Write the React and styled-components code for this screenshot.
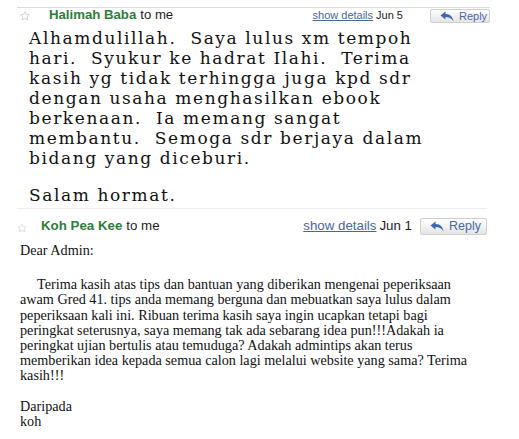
import React from 'react'
import styled, { createGlobalStyle } from 'styled-components'

const GlobalStyle = createGlobalStyle`
  html, body {
    margin: 0;
    padding: 0;
    background: #fff;
  }
`

const Page = styled.div`
  width: 519px;
  height: 439px;
  overflow: hidden;
  background: #fff;
`

const Header = styled.div`
  display: flex;
  align-items: flex-start;
  margin: ${p => p.$top}px ${p => p.$right}px 0 17px;
  padding: ${p => p.$pad}px 0 0 ${p => p.$left}px;
  height: ${p => p.$h}px;
  border-top: 1px solid ${p => p.$line};
  font-family: "Liberation Sans", Arial, sans-serif;
  font-size: ${p => p.$size}px;
  line-height: ${p => p.$lh}px;
  color: #222;
`

const Star = styled.span`
  display: flex;
  width: 10px;
  margin-top: ${p => p.$drop}px;
  margin-right: ${p => p.$gap}px;
`

const Sender = styled.span`
  font-weight: bold;
  color: #2f7d3b;
  margin-right: 4px;
`

const ToMe = styled.span`
  flex: 1;
`

const Details = styled.span`
  color: #4a6796;
  text-decoration: underline;
  margin-right: 3px;
  font-size: ${p => p.$size}px;
`

const DateText = styled.span`
  margin-right: ${p => p.$gap}px;
  font-size: ${p => p.$size}px;
`

const ReplyButton = styled.div`
  display: flex;
  align-items: center;
  gap: 5px;
  width: ${p => p.$w}px;
  height: ${p => p.$h}px;
  margin-top: ${p => p.$drop}px;
  box-sizing: border-box;
  padding-left: 9px;
  border: 1px solid #cfcfcf;
  border-radius: 2px;
  background: linear-gradient(#ffffff, #e4e4e4);
  color: #4a68a4;
  font-size: ${p => p.$size}px;
`

const BigBody = styled.div`
  width: 461px;
  overflow: hidden;
  padding: 3px 0 0 29px;
  font-family: "DejaVu Serif", serif;
  font-size: 17px;
  line-height: 20px;
  letter-spacing: 1.6px;
  color: #111;
`

const SmallBody = styled.div`
  padding: 5px 0 0 20px;
  font-family: "Liberation Serif", "Times New Roman", serif;
  font-size: 14.2px;
  line-height: 15.2px;
  color: #111;
`

const Line = styled.div`
  white-space: pre;
  margin-top: ${p => p.$gap || 0}px;
  text-indent: ${p => p.$indent || 0}px;
`

const StarIcon = ({ color }) => (
  <svg width="10" height="10" viewBox="0 0 20 20">
    <path
      d="M10 1.5l2.6 5.6 6.1.7-4.5 4.1 1.2 6-5.4-3-5.4 3 1.2-6L1.3 7.8l6.1-.7z"
      fill="none"
      stroke={color}
      strokeWidth="1.6"
      strokeLinejoin="round"
    />
  </svg>
)

const ReplyIcon = () => (
  <svg width="14" height="11" viewBox="0 0 14 11">
    <path d="M5.5 0.5 L0.5 4.5 L5.5 8.5 V6 C9 6 11.5 7 13.5 10.5 C13 6.5 10.5 3 5.5 3 Z" fill="#3a67b0" />
  </svg>
)

const MessageHeader = ({ name, date, s }) => (
  <Header
    $top={s.top}
    $right={s.right}
    $pad={s.pad}
    $left={s.left}
    $h={s.h}
    $line={s.line}
    $size={s.size}
    $lh={s.lh}
  >
    <Star $gap={s.starGap} $drop={s.starDrop}>
      <StarIcon color={s.starColor} />
    </Star>
    <Sender>{name}</Sender>
    <ToMe>to me</ToMe>
    <Details $size={s.metaSize}>show details</Details>
    <DateText $gap={s.dateGap} $size={s.metaSize}>{date}</DateText>
    <ReplyButton $w={s.bw} $h={s.bh} $drop={s.bDrop} $size={s.bSize}>
      <ReplyIcon />
      Reply
    </ReplyButton>
  </Header>
)

const firstHeader = {
  top: 7, right: 29, pad: 0, left: 3, h: 17, line: '#dcdcdc',
  size: 13.2, lh: 14, metaSize: 11, starColor: '#c9c9c9', starGap: 19, starDrop: 3,
  dateGap: 27, bw: 60, bh: 14, bDrop: 1, bSize: 11,
}

const secondHeader = {
  top: 3, right: 32, pad: 9, left: 0, h: 20, line: '#eeeeee',
  size: 13.3, lh: 15, metaSize: 13.3, starColor: '#d8d8d8', starGap: 14, starDrop: 5,
  dateGap: 8, bw: 67, bh: 17, bDrop: 0, bSize: 12.5,
}

const bigLines = [
  'Alhamdulillah.  Saya lulus xm tempoh',
  'hari.  Syukur ke hadrat Ilahi.  Terima',
  'kasih yg tidak terhingga juga kpd sdr',
  'dengan usaha menghasilkan ebook',
  'berkenaan.  Ia memang sangat',
  'membantu.  Semoga sdr berjaya dalam',
  'bidang yang diceburi.',
]

const smallLines = [
  'Terima kasih atas tips dan bantuan yang diberikan mengenai peperiksaan',
  'awam Gred 41. tips anda memang berguna dan mebuatkan saya lulus dalam',
  'peperiksaan kali ini. Ribuan terima kasih saya ingin ucapkan tetapi bagi',
  'peringkat seterusnya, saya memang tak ada sebarang idea pun!!!Adakah ia',
  'peringkat ujian bertulis atau temuduga? Adakah admintips akan terus',
  'memberikan idea kepada semua calon lagi melalui website yang sama? Terima',
  'kasih!!!',
]

export default function App() {
  return (
    <Page>
      <GlobalStyle />
      <MessageHeader name="Halimah Baba" date="Jun 5" s={firstHeader} />
      <BigBody>
        {bigLines.map(l => (
          <Line key={l}>{l}</Line>
        ))}
        <Line $gap={17}>Salam hormat.</Line>
      </BigBody>
      <MessageHeader name="Koh Pea Kee" date="Jun 1" s={secondHeader} />
      <SmallBody>
        <Line>Dear Admin:</Line>
        <Line $gap={19} $indent={17}>{smallLines[0]}</Line>
        {smallLines.slice(1).map(l => (
          <Line key={l}>{l}</Line>
        ))}
        <Line $gap={15}>Daripada</Line>
        <Line>koh</Line>
      </SmallBody>
    </Page>
  )
}
